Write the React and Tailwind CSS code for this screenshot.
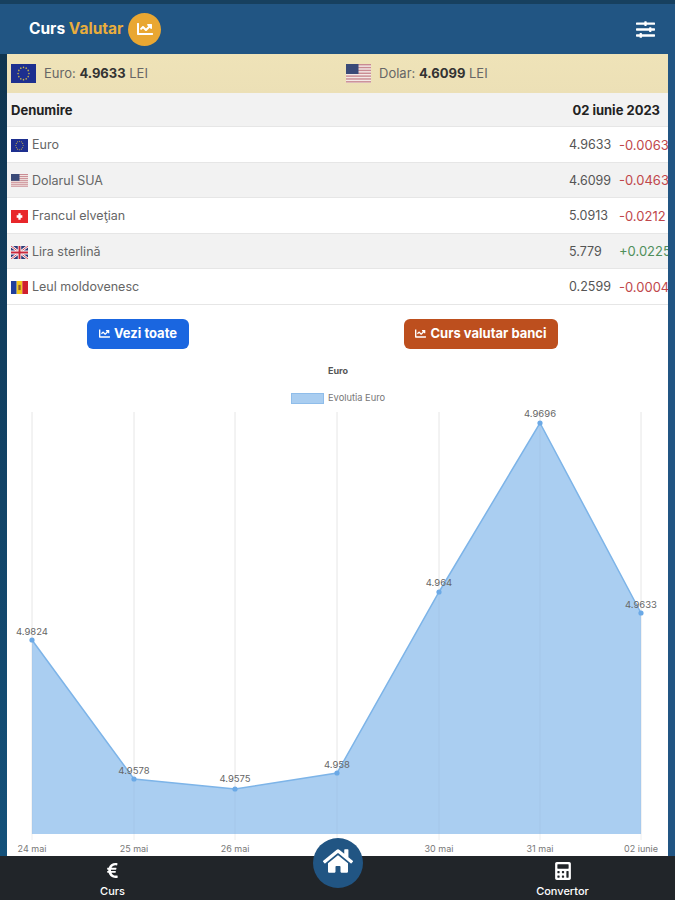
import React from "react";
import { FaChartLine, FaSlidersH, FaHome, FaCalculator, FaEuroSign } from "react-icons/fa";

const font = { fontFamily: "Inter, 'Liberation Sans', sans-serif" };

function FlagEu({ className }) {
  const stars = Array.from({ length: 12 }, (_, i) => {
    const a = (i / 12) * Math.PI * 2;
    return <circle key={i} cx={15 + Math.cos(a) * 6.5} cy={10 + Math.sin(a) * 6.5} r="0.9" fill="#c9b64a" />;
  });
  return (
    <svg viewBox="0 0 30 20" className={className} preserveAspectRatio="none">
      <rect width="30" height="20" fill="#1d2f8f" />
      {stars}
    </svg>
  );
}

function FlagUs({ className }) {
  return (
    <svg viewBox="0 0 30 20" className={className} preserveAspectRatio="none">
      <rect width="30" height="20" fill="#f3e9e6" />
      {[0, 3, 6, 9, 12, 15, 18].map((y) => (
        <rect key={y} y={y} width="30" height="1.5" fill="#c98a92" />
      ))}
      <rect width="15" height="10.5" fill="#3a4a78" />
    </svg>
  );
}

function FlagCh({ className }) {
  return (
    <svg viewBox="0 0 30 20" className={className} preserveAspectRatio="none">
      <rect width="30" height="20" fill="#e8262a" />
      <rect x="13" y="5" width="4" height="10" fill="#fff" />
      <rect x="10" y="8" width="10" height="4" fill="#fff" />
    </svg>
  );
}

function FlagUk({ className }) {
  return (
    <svg viewBox="0 0 30 20" className={className} preserveAspectRatio="none">
      <rect width="30" height="20" fill="#2c3a78" />
      <path d="M0 0L30 20M30 0L0 20" stroke="#fff" strokeWidth="4" />
      <path d="M0 0L30 20M30 0L0 20" stroke="#c8283c" strokeWidth="1.4" />
      <path d="M15 0V20M0 10H30" stroke="#fff" strokeWidth="6" />
      <path d="M15 0V20M0 10H30" stroke="#c8283c" strokeWidth="3.4" />
    </svg>
  );
}

function FlagMd({ className }) {
  return (
    <svg viewBox="0 0 30 20" className={className} preserveAspectRatio="none">
      <rect width="10" height="20" fill="#1f3f9c" />
      <rect x="10" width="10" height="20" fill="#f2c81e" />
      <rect x="20" width="10" height="20" fill="#d0202e" />
      <rect x="13" y="6" width="4" height="8" fill="#8a5a2c" />
    </svg>
  );
}

const rows = [
  { name: "Euro", Flag: FlagEu, value: "4.9633", delta: "-0.0063" },
  { name: "Dolarul SUA", Flag: FlagUs, value: "4.6099", delta: "-0.0463" },
  { name: "Francul elveţian", Flag: FlagCh, value: "5.0913", delta: "-0.0212" },
  { name: "Lira sterlină", Flag: FlagUk, value: "5.779", delta: "+0.0225" },
  { name: "Leul moldovenesc", Flag: FlagMd, value: "0.2599", delta: "-0.0004" },
];

// chart points, in the svg's own coordinates
const points = [
  { x: 25, y: 285, label: "4.9824", day: "24 mai", ly: 280 },
  { x: 127, y: 424, label: "4.9578", day: "25 mai", ly: 419 },
  { x: 228, y: 434, label: "4.9575", day: "26 mai", ly: 427 },
  { x: 330, y: 418, label: "4.958", day: "", ly: 413 },
  { x: 432, y: 237, label: "4.964", day: "30 mai", ly: 231 },
  { x: 533, y: 68, label: "4.9696", day: "31 mai", ly: 62 },
  { x: 634, y: 258, label: "4.9633", day: "02 iunie", ly: 253 },
];

function Chart() {
  const line = points.map((p) => `${p.x},${p.y}`).join(" ");
  const area = `25,479 ${line} 634,479`;
  return (
    <svg viewBox="0 0 661 500" className="block w-[661px] h-[500px]" style={font}>
      <text x="331" y="19" textAnchor="middle" fontSize="9" fontWeight="700" fill="#555">Euro</text>
      <rect x="284.5" y="38.5" width="32" height="10" fill="#a9cdf0" stroke="#8fbdea" />
      <text x="321" y="46" fontSize="9.3" fill="#777">Evolutia Euro</text>
      {points.map((p) => (
        <line key={p.x} x1={p.x} x2={p.x} y1="57" y2="485" stroke="#eeeeee" />
      ))}
      <polygon points={area} fill="#aacef1" />
      {points.map((p) => (
        <line key={p.x} x1={p.x} x2={p.x} y1="57" y2="479" stroke="#000" strokeOpacity="0.03" />
      ))}
      <polyline points={line} fill="none" stroke="#7db4e8" strokeWidth="1.5" />
      {points.map((p) => (
        <circle key={p.x} cx={p.x} cy={p.y} r="2.6" fill="#6ba9e6" />
      ))}
      {points.map((p) => (
        <text key={p.x} x={p.x} y={p.ly} textAnchor="middle" fontSize="9.5" fill="#666">{p.label}</text>
      ))}
      {points.map((p) => (
        <text key={p.x} x={p.x} y="497" textAnchor="middle" fontSize="9" fill="#777">{p.day}</text>
      ))}
    </svg>
  );
}

export default function App() {
  return (
    <div className="relative w-[675px] h-[900px] flex flex-col overflow-hidden bg-[#215583]" style={font}>
      {/* header */}
      <div className="h-[54px] shrink-0 border-t-4 border-[#17405f] bg-[#215583] flex items-center justify-between pl-[29px] pr-[20px]">
        <div className="flex items-center gap-[5px]">
          <span className="text-[15.5px] font-bold text-white">
            Curs <span className="text-[#e9ad3c]">Valutar</span>
          </span>
          <span className="w-[33px] h-[33px] rounded-full bg-[#e9a732] flex items-center justify-center">
            <FaChartLine className="text-white text-[16px]" />
          </span>
        </div>
        <FaSlidersH className="text-white text-[19px]" />
      </div>

      {/* body */}
      <div className="flex-1 flex min-h-0">
        <div className="w-[7px] shrink-0 bg-gradient-to-b from-[#0f3450] to-[#14517a]" />
        <div className="w-[661px] bg-white overflow-hidden">
          {/* highlight strip */}
          <div className="h-[39px] bg-gradient-to-b from-[#efe3b8] to-[#ece0b6] flex items-center text-[13px] text-[#666]">
            <div className="w-[333px] pl-[4px] flex items-center gap-[8px]">
              <FlagEu className="w-[25px] h-[19px]" />
              <span>Euro: <b className="text-[#333]">4.9633</b> LEI</span>
            </div>
            <div className="flex items-center gap-[8px] pl-[6px]">
              <FlagUs className="w-[25px] h-[19px]" />
              <span>Dolar: <b className="text-[#333]">4.6099</b> LEI</span>
            </div>
          </div>

          {/* table */}
          <div className="h-[34px] pt-[3px] bg-[#f2f2f2] flex items-center justify-between pl-[4px] pr-[8px] text-[13px] font-bold text-[#222] border-b border-[#e6e6e6]">
            <span>Denumire</span>
            <span>02 iunie 2023</span>
          </div>
          {rows.map(({ name, Flag, value, delta }, i) => (
            <div
              key={name}
              className={`h-[35.6px] pt-[2px] flex items-center pl-[4px] text-[12.5px] text-[#666] border-b border-[#e6e6e6] ${i % 2 ? "bg-[#f2f2f2]" : "bg-white"}`}
            >
              <Flag className="w-[17px] h-[13px] mr-[4px]" />
              <span className="flex-1">{name}</span>
              <span className="w-[50px] shrink-0 text-[#555]">{value}</span>
              <span className={`w-[49px] shrink-0 whitespace-nowrap text-[13px] ${delta[0] === "+" ? "text-[#4f8f5b]" : "text-[#c0474b]"}`}>{delta}</span>
            </div>
          ))}

          {/* buttons */}
          <div className="h-[50px] pb-[6px] flex items-end justify-between pl-[80px] pr-[110px]">
            <button className="h-[30px] w-[102px] rounded-[6px] bg-[#1a66e0] text-white text-[13px] font-bold flex items-center justify-center gap-[4px]">
              <FaChartLine className="text-[11px]" /> Vezi toate
            </button>
            <button className="h-[30px] w-[154px] rounded-[6px] bg-[#bd4f1e] text-white text-[13px] font-bold flex items-center justify-center gap-[4px]">
              <FaChartLine className="text-[11px]" /> Curs valutar banci
            </button>
          </div>

          <Chart />
        </div>
      </div>

      {/* bottom bar */}
      <div className="h-[44px] shrink-0 bg-[#212529] grid grid-cols-3 text-white text-[11px] font-medium">
        <div className="flex flex-col items-center justify-end pb-[1px] gap-[4px]">
          <FaEuroSign className="text-[17px]" />
          <span>Curs</span>
        </div>
        <div />
        <div className="flex flex-col items-center justify-end pb-[1px] gap-[3px]">
          <FaCalculator className="text-[18px]" />
          <span>Convertor</span>
        </div>
      </div>

      {/* home button sits over the chart and the bar */}
      <div className="absolute left-[313px] top-[838px] w-[50px] h-[50px] pb-[4px] rounded-full bg-[#215583] flex items-center justify-center">
        <FaHome className="text-white text-[30px]" />
      </div>
    </div>
  );
}
